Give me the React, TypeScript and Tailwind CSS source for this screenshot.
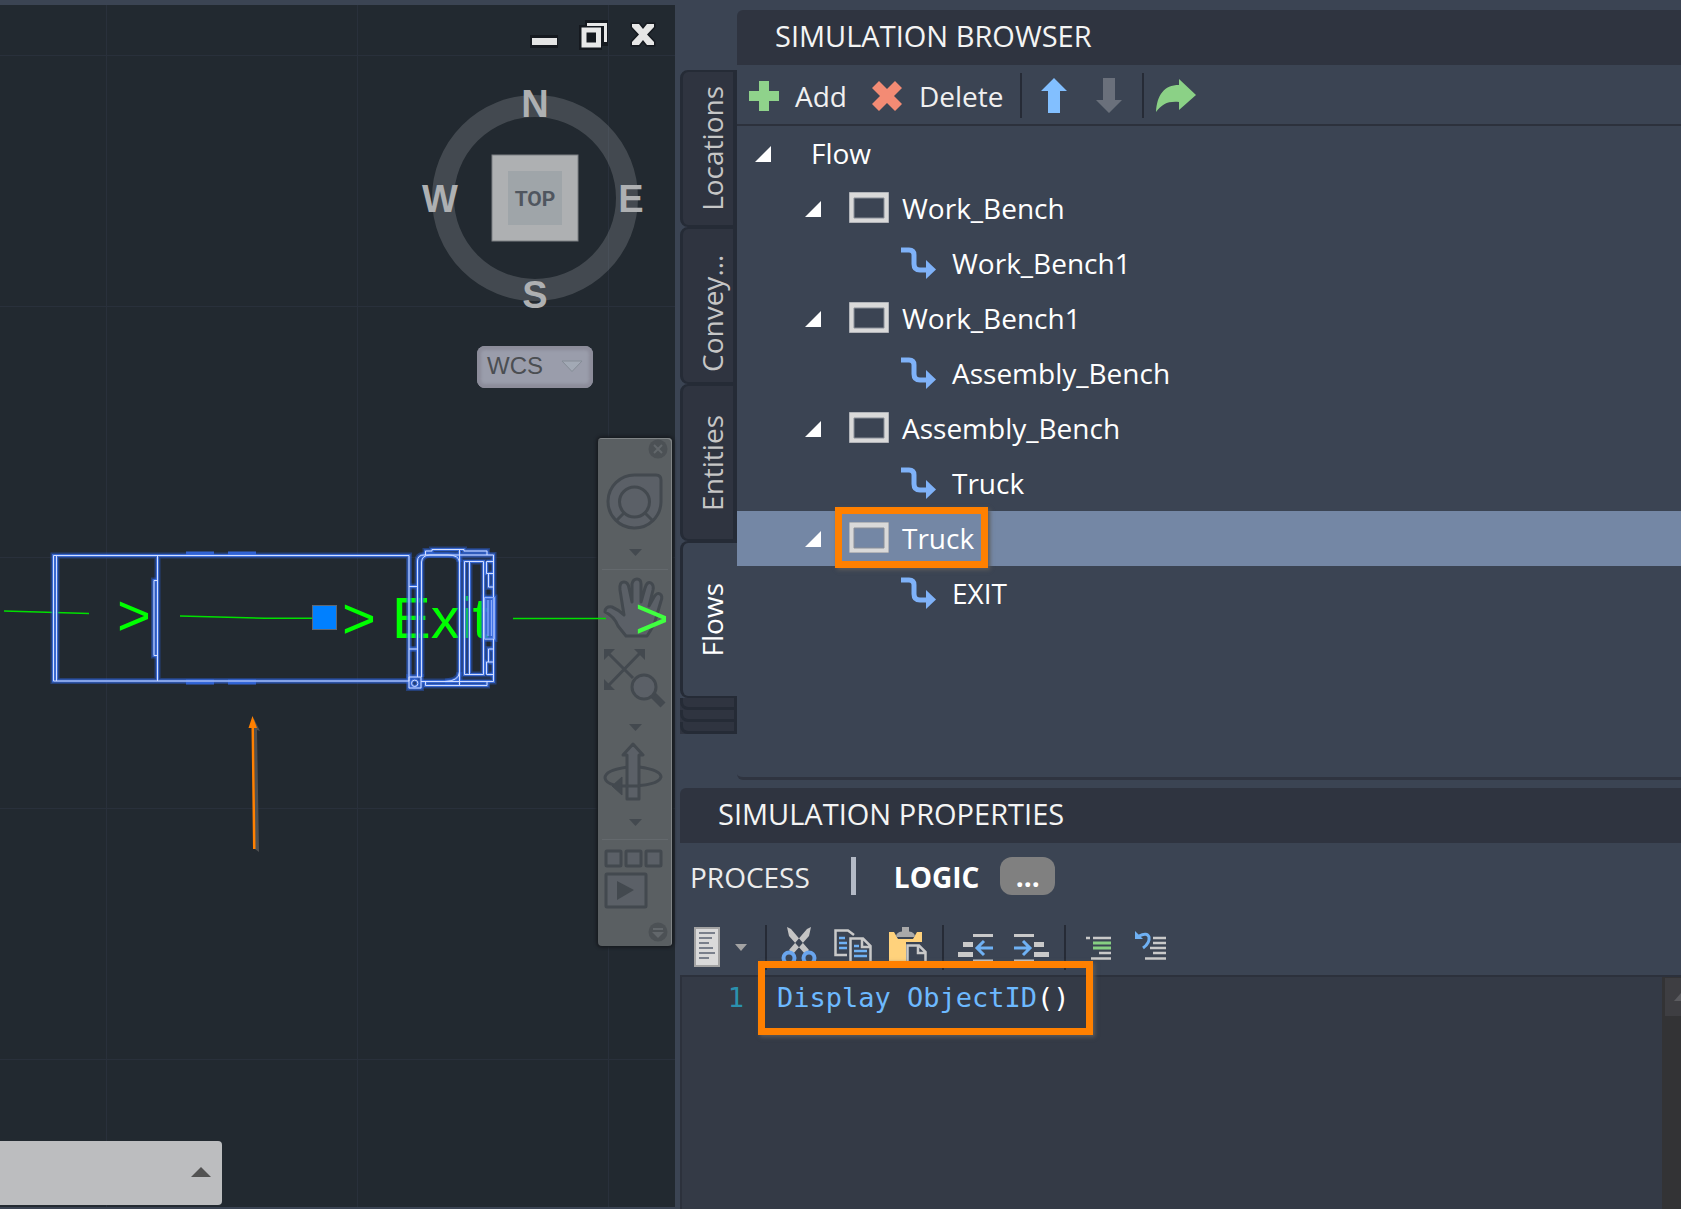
import { useState } from "react";

type NodeKind = "root" | "station" | "link";

const tree: { id: number; label: string; kind: NodeKind; marked?: boolean }[] = [
  { id: 1, label: "Flow",           kind: "root" },
  { id: 2, label: "Work_Bench",     kind: "station" },
  { id: 3, label: "Work_Bench1",    kind: "link" },
  { id: 4, label: "Work_Bench1",    kind: "station" },
  { id: 5, label: "Assembly_Bench", kind: "link" },
  { id: 6, label: "Assembly_Bench", kind: "station" },
  { id: 7, label: "Truck",          kind: "link" },
  { id: 8, label: "Truck",          kind: "station", marked: true },
  { id: 9, label: "EXIT",           kind: "link" },
];

const sideTabs = [
  { label: "Locations", clipped: false },
  { label: "Convey...", clipped: true },
  { label: "Entities",  clipped: false },
  { label: "Flows",     clipped: false },
];

/* ---------- drawing area ---------- */

function GridLines() {
  return (
    <svg className="absolute inset-0 h-full w-full" aria-hidden="true">
      <defs>
        <pattern id="grid" x="106" y="50" width="251" height="251" patternUnits="userSpaceOnUse">
          <path d="M0.5 0V251M0 0.5H251" stroke="#29303b" strokeWidth="1" />
        </pattern>
      </defs>
      <rect width="100%" height="100%" fill="url(#grid)" />
    </svg>
  );
}

function Scene() {
  return (
    <svg className="pointer-events-none absolute left-0 top-0 h-[900px] w-[675px]" viewBox="0 5 675 900">
      <g stroke="#00e000" strokeWidth="1.5" fill="none">
        <path d="M4 611L89 613.5" />
        <path d="M180 616L265 618.3H312" />
        <path d="M513 618.5H606" />
      </g>
      <g fill="#00ff00" fontFamily="Liberation Sans, Arial, sans-serif" fontSize="58">
        <text x="117" y="635">&gt;</text>
        <text x="342" y="638">&gt;</text>
        <text x="392" y="638">Exit</text>
        <text x="635" y="638" fill="#40ff40">&gt;</text>
      </g>
      <defs>
        <g id="truck" fill="none">
          <path d="M53.5 555.5H409V681H53.5ZM56.5 555.5V681M157.5 555.5V681" />
          <path d="M157.5 580.5H154V655.5H157.5" />
          <path d="M409 586.5H417M409 649H417" />
          <path d="M417.5 677V561Q417.5 555 424 555H493.5V681.5H421" />
          <path d="M421.5 677V562Q422 555 430 555H448Q459 555 459.5 562V672Q459 681 445 681.5" />
          <path d="M425.5 555V551H432V549.5H464V551H487V555M459.5 550V562" />
          <path d="M425.5 681.5V685.5H487V681.5M459.5 672V685" />
          <path d="M464.5 561.5H483.5V674.5H464.5ZM469.5 561.5V674.5" />
          <path d="M486.5 561.5H493.5M486.5 561.5V573.5H493.5M488.5 573.5V587H493.5" />
          <path d="M486.5 674.5H493.5M486.5 674.5V662H493.5M488.5 662V649H493.5" />
          <path d="M484.5 597.5H494.5V639H484.5ZM488 600V636M491.5 600V636" />
          <path d="M409 677H421V688H409Z" />
          <circle cx="414.7" cy="683.3" r="3.2" />
        </g>
      </defs>
      <path d="M186 554H214M228 554H256M186 682H214M228 682H256" stroke="#3566d6" strokeWidth="5" />
      <use href="#truck" stroke="#2a5ed0" strokeOpacity="0.45" strokeWidth="6" />
      <use href="#truck" stroke="#3c70e0" strokeOpacity="0.85" strokeWidth="3" />
      <use href="#truck" stroke="#d3deff" strokeWidth="1" />
      <rect x="484" y="597" width="11" height="42" fill="#4a7cf0" fillOpacity="0.5" />
      <rect x="312.5" y="605.5" width="24" height="24" fill="#0080ff" stroke="#5f6873" />
      <path d="M254 719L260 731L257 730L259 852L255 849Z" fill="#5b5b5b" opacity="0.8" />
      <path d="M252.5 716L257 728H254L255.5 849H253L251.5 728H248.5Z" fill="#ff8000" />
    </svg>
  );
}

function ViewCube() {
  return (
    <svg className="h-[240px] w-[230px]" viewBox="0 0 230 240" role="img" aria-label="View cube">
      <circle cx="115" cy="115" r="92" fill="none" stroke="#a9acaf" strokeOpacity="0.25" strokeWidth="22" />
      <rect x="72" y="72" width="86" height="86" fill="#aeb0b2" stroke="#7d8083" />
      <rect x="88" y="88" width="54" height="54" fill="#9fa5a9" />
      <text x="115" y="123" textAnchor="middle" fontFamily="Roboto, sans-serif" fontWeight="700" fontSize="21" fill="#50565f">TOP</text>
      <g fontFamily="Liberation Sans, Arial, sans-serif" fontWeight="700" fontSize="38" fill="#aeb0b2" textAnchor="middle">
        <text x="115" y="34">N</text>
        <text x="115" y="225">S</text>
        <text x="20" y="129">W</text>
        <text x="211" y="129">E</text>
      </g>
    </svg>
  );
}

function WindowButtons() {
  return (
    <div className="flex justify-end gap-5 pr-[17px] pt-3">
      <button aria-label="Minimize" className="h-[34px] w-[30px]">
        <svg viewBox="0 0 30 34" className="h-full w-full">
          <rect x="2" y="18" width="28" height="13" fill="#15191f" />
          <rect x="4" y="21" width="25" height="7" fill="#e4e4e4" />
        </svg>
      </button>
      <button aria-label="Restore" className="h-[34px] w-[30px]">
        <svg viewBox="0 0 30 34" className="h-full w-full">
          <path d="M7 3H30V29H24V33H1V8H7Z" fill="#15191f" />
          <path d="M9 7.500H27.500V25" fill="none" stroke="#e8e8e8" strokeWidth="3" />
          <rect x="6" y="13" width="14.500" height="15" fill="#15191f" stroke="#e8e8e8" strokeWidth="5" />
        </svg>
      </button>
      <button aria-label="Close" className="h-[34px] w-[30px]">
        <svg viewBox="0 0 30 34" className="h-full w-full">
          <path d="M4 7H11L15 12L19 7H26V10L19 17.500L26 25V28H19L15 23L11 28H4V25L11 17.500L4 10Z" fill="#e6e6e6" stroke="#15191f" strokeWidth="3" paintOrder="stroke" />
        </svg>
      </button>
    </div>
  );
}

function NavCaret() {
  return (
    <svg viewBox="0 0 74 28" className="h-7 w-full" fill="#43494f">
      <path d="M31 11H44L37.500 18Z" />
    </svg>
  );
}

function NavigationBar() {
  return (
    <div className="mr-[3px] flex w-[74px] flex-col rounded bg-[#5a5f62] shadow-[0_0_3px_2px_#181c21,inset_-1px_1px_0_#808486] [&_svg]:block">
      <button aria-label="Close bar">
        <svg viewBox="0 0 74 24" className="h-6 w-full">
          <circle cx="60" cy="11" r="9.500" fill="#4c5155" />
          <path d="M56 7L64 15M64 7L56 15" stroke="#62676b" strokeWidth="2" />
        </svg>
      </button>
      <button aria-label="Steering wheel">
        <svg viewBox="0 0 74 76" className="h-[76px] w-full" fill="#5b6067" stroke="#43494f" strokeWidth="3">
          <path d="M37 13H58Q63 13 63 18V40A26.500 26.500 0 1 1 37 13Z" />
          <circle cx="36.500" cy="40" r="15" />
          <path d="M26 51L18 59M47 51L55 59" />
        </svg>
      </button>
      <NavCaret />
      <hr className="mx-1 mt-[3px] border-[#64696d]" />
      <button aria-label="Pan">
        <svg viewBox="0 0 74 74" className="h-[74px] w-full" fill="#5b6067" stroke="#43494f" strokeWidth="3" strokeLinejoin="round">
          <path d="M28 66L20 56Q16 46 7 42Q7 36 14 37Q21 40 26 45L22 20Q21 12 26 12Q30 12 31 18L34 32V14Q35 9 39 9Q43 9 43 14V32L47 18Q49 11 53 13Q56 15 55 20L51 36L56 27Q59 22 62 24Q65 26 63 31L58 48Q56 56 49 66Z" />
        </svg>
      </button>
      <button aria-label="Zoom extents">
        <svg viewBox="0 0 74 69" className="h-[69px] w-full" fill="none" stroke="#43494f" strokeWidth="3">
          <path d="M10 9L35 34M42 9L10 42" />
          <path d="M6 5H17L6 16ZM47 5H36L47 16ZM6 46V35L17 46Z" fill="#43494f" stroke="none" />
          <path d="M54 50L65 61" strokeWidth="7" />
          <circle cx="46" cy="43" r="12" fill="#5b6067" />
        </svg>
      </button>
      <NavCaret />
      <button aria-label="Orbit">
        <svg viewBox="0 0 74 67" className="h-[67px] w-full" fill="#5b6067" stroke="#43494f" strokeWidth="3" strokeLinejoin="round">
          <path d="M30 26Q7 29 7 37Q8 42 16 44M41 26Q63 29 63 36Q60 46 20 45" fill="none" />
          <path d="M35 3L45 14H41V58H29V14H25Z" />
          <path d="M29 45H41" />
          <path d="M14 45L24 36V54Z" fill="#43494f" strokeWidth="1" />
        </svg>
      </button>
      <NavCaret />
      <hr className="mx-1 mt-[3px] border-[#64696d]" />
      <button aria-label="Show motion">
        <svg viewBox="0 0 74 78" className="h-[78px] w-full" fill="#5b6067" stroke="#43494f" strokeWidth="3">
          <rect x="8" y="11" width="15" height="15" rx="1" />
          <rect x="28" y="11" width="15" height="15" rx="1" />
          <rect x="48" y="11" width="15" height="15" rx="1" />
          <rect x="8" y="34" width="40" height="33" rx="1" />
          <path d="M19 41V60L36 50Z" fill="#43494f" stroke="none" />
        </svg>
      </button>
      <button aria-label="Bar options">
        <svg viewBox="0 0 74 28" className="h-7 w-full">
          <circle cx="60" cy="14" r="9.500" fill="#4c5155" />
          <path d="M55 11H65" stroke="#62676b" strokeWidth="2" />
          <path d="M54 14H66L60 20Z" fill="#62676b" />
        </svg>
      </button>
    </div>
  );
}

function Viewport() {
  return (
    <section className="relative flex flex-col bg-[#222930]" aria-label="Drawing">
      <GridLines />
      <div className="relative flex flex-1 flex-col">
        <WindowButtons />
        <div className="mt-8 flex flex-col items-end">
          <div className="mr-[25px] flex w-[230px] flex-col items-center">
            <ViewCube />
            <button className="mt-[23px] flex h-[42px] w-[116px] items-center justify-between rounded-lg bg-[#9a9dab] px-[10px] pb-[2px] font-['Liberation_Sans',Arial,sans-serif] text-[24px] text-[#4b4e52] shadow-[inset_0_0_3px_4px_#8c8c9a]">
              WCS
              <svg viewBox="0 0 22 12" className="h-3 w-[22px]">
                <path d="M1 1H21L11 11.500Z" fill="#a2a9b5" stroke="#858c96" />
              </svg>
            </button>
          </div>
          <div className="mt-[50px]">
            <NavigationBar />
          </div>
        </div>
        <button aria-label="Command history" className="mb-[2px] mt-auto flex h-16 w-[222px] items-center justify-end rounded-r bg-[#bcbdbf] pb-[2px] pr-[11px]">
          <svg viewBox="0 0 20 10" className="h-[10px] w-5" fill="#525252">
            <path d="M10 0L20 10H0Z" />
          </svg>
        </button>
      </div>
      <Scene />
    </section>
  );
}

/* ---------- simulation browser ---------- */

function Divider() {
  return <span className="h-[45px] w-[2px] bg-[#262b36]" />;
}

function BrowserToolbar() {
  return (
    <div className="flex h-[61px] items-center border-b-2 border-[#2c313c] pl-3 pt-[2px] text-[#f0f0f0]">
      <button className="flex items-center gap-4">
        <svg viewBox="0 0 30 30" className="h-[30px] w-[30px]" fill="#8fd28b">
          <path d="M10 0H20V10H30V20H20V30H10V20H0V10H10Z" />
        </svg>
        Add
      </button>
      <button className="ml-6 flex items-center gap-4">
        <svg viewBox="0 0 32 32" className="h-8 w-8" fill="#f38b74">
          <path d="M8 1L16 9L24 1L31 8L23 16L31 24L24 31L16 23L8 31L1 24L9 16L1 8Z" />
        </svg>
        Delete
      </button>
      <span className="ml-4 mr-[19px] flex"><Divider /></span>
      <button aria-label="Move up">
        <svg viewBox="0 0 26 35" className="h-[35px] w-[26px]" fill="#82bfff">
          <path d="M13 0L26 13H19V35H7V13H0Z" />
        </svg>
      </button>
      <button aria-label="Move down" className="ml-[29px]">
        <svg viewBox="0 0 26 35" className="h-[35px] w-[26px]" fill="#6a707b">
          <path d="M13 35L26 22H19V0H7V22H0Z" />
        </svg>
      </button>
      <span className="ml-5 mr-3 flex"><Divider /></span>
      <button aria-label="Share">
        <svg viewBox="0 0 40 34" className="h-[34px] w-10" fill="#8bd186">
          <path d="M0 33C1 16 8 6 23 6V0L40 16L23 31V23C12 22 6 25 0 33Z" />
        </svg>
      </button>
    </div>
  );
}

function Expander() {
  return (
    <button aria-label="Collapse" className="mt-[2px] h-4 w-4 shrink-0">
      <svg viewBox="0 0 16 16" className="h-full w-full" fill="#ffffff">
        <path d="M16 0V16H0Z" />
      </svg>
    </button>
  );
}

function FlowTree() {
  const [selected, setSelected] = useState(8);

  return (
    <ul className="flex-1">
      {tree.map((n) => (
        <li
          key={n.id}
          onClick={() => setSelected(n.id)}
          className={`flex h-[55px] items-center pb-[2px] text-white ${selected === n.id ? "bg-[#7487a5]" : ""} ${
            n.kind === "root" ? "gap-10 pl-[18px]" : n.kind === "station" ? "gap-7 pl-[68px]" : "gap-4 pl-[164px]"
          }`}
        >
          {n.kind !== "link" && <Expander />}
          {n.kind === "station" && (
            <span className="relative flex items-center gap-[13px]">
              <svg viewBox="0 0 40 31" className="h-[31px] w-10">
                <path d="M0 0H40V31H0ZM5 6V26H35V6Z" fill="#d9d9d9" fillRule="evenodd" stroke="#8a8f99" />
              </svg>
              {n.label}
              {n.marked && (
                <span className="pointer-events-none absolute -inset-x-[14px] -bottom-[9px] -top-[10px] border-[7px] border-[#ff8000] shadow-[2px_2px_4px_#5b5b5b]" />
              )}
            </span>
          )}
          {n.kind === "link" && (
            <svg viewBox="0 0 35 32" className="h-8 w-[35px]">
              <path d="M0 3H8Q13 3 13 8V17Q13 23 19 23H27" fill="none" stroke="#7fb2f8" strokeWidth="5" />
              <path d="M25 13L35 22.500L25 32Z" fill="#7fb2f8" />
            </svg>
          )}
          {n.kind !== "station" && <span>{n.label}</span>}
        </li>
      ))}
    </ul>
  );
}

function SideTabs() {
  const [active, setActive] = useState("Flows");

  return (
    <div className="mt-[60px] w-[57px] shrink-0" role="tablist">
      {sideTabs.map((t) => (
        <button
          key={t.label}
          role="tab"
          aria-selected={active === t.label}
          onClick={() => setActive(t.label)}
          className={`flex h-[157px] w-full items-center justify-center rounded-l-lg border-y-2 border-l-[3px] border-[#252b36] ${
            active === t.label ? "bg-[#3b4453] pl-1 text-white" : "border-r-4 bg-[#2f3440] pl-2 text-[#c6c6c6]"
          }`}
        >
          <span className={`rotate-180 text-left leading-[36px] [writing-mode:vertical-rl] ${t.clipped ? "h-[132px]" : ""}`}>{t.label}</span>
        </button>
      ))}
      {[1, 2, 3].map((i) => (
        <div key={i} className="bg-[#2f3440]">
          <div className="h-3 rounded-bl-lg border-b-[3px] border-l-[3px] border-r-[3px] border-[#252b36]" />
        </div>
      ))}
    </div>
  );
}

function SimulationBrowser() {
  return (
    <section className="flex pb-2 pt-[10px]">
      <SideTabs />
      <div className="flex flex-1 flex-col rounded-bl-md rounded-tl-md border-b-[3px] border-[#2f3440]">
        <h2 className="flex h-[55px] items-center rounded-tl-md bg-[#2f3440] pb-1 pl-[38px] text-[29px] text-[#f4f4f4]">SIMULATION BROWSER</h2>
        <BrowserToolbar />
        <FlowTree />
      </div>
    </section>
  );
}

/* ---------- simulation properties ---------- */

function EditorToolbar() {
  return (
    <div className="flex h-[62px] items-start pl-[14px] pt-3 [&_svg]:block">
      <button aria-label="Snippets" className="flex items-center gap-[15px] pt-[2px]">
        <svg viewBox="0 0 26 40" className="h-10 w-[26px]">
          <rect x="1" y="1" width="24" height="38" fill="#dadada" stroke="#a3a3a3" strokeWidth="2" />
          <path d="M5 6H21M5 11H18M5 16H15M5 21H19M5 26H21M5 31H15" stroke="#7a808c" strokeWidth="2" />
        </svg>
        <svg viewBox="0 0 12 7" className="h-[7px] w-3" fill="#a3a3a3">
          <path d="M0 0H12L6 7Z" />
        </svg>
      </button>
      <span className="ml-[18px] mr-[14px] flex"><Divider /></span>
      <button aria-label="Cut" className="pt-[2px]">
        <svg viewBox="0 0 36 40" className="h-10 w-9">
          <path d="M6 0L8 9L24 27L28 23L10 2ZM30 0L28 9L12 27L8 23L26 2Z" fill="#c4c4c4" />
          <circle cx="8" cy="31" r="5.500" fill="none" stroke="#69a5ee" strokeWidth="4" />
          <circle cx="28" cy="31" r="5.500" fill="none" stroke="#69a5ee" strokeWidth="4" />
        </svg>
      </button>
      <button aria-label="Copy" className="ml-[17px] pt-[2px]">
        <svg viewBox="0 0 38 38" className="h-[38px] w-[38px]" fill="none" strokeWidth="2.500" stroke="#c9c9c9">
          <path d="M13 28H1.500V3.500H14L20 8" />
          <path d="M16.500 38V11.500H29L36.500 19V38M28 12V20H36" />
          <path d="M5 11H11M5 16H13M5 21H13M20 19H25M20 24H33M20 29H33" stroke="#6fb1f4" />
        </svg>
      </button>
      <button aria-label="Paste" className="ml-[17px] pt-[2px]">
        <svg viewBox="0 0 38 38" className="h-[38px] w-[38px]">
          <path d="M0 5H5L9 12H24L28 5H33V15H17V38H0Z" fill="#ffd27c" />
          <path d="M7 10Q7 5 13 4.500V0H20V4.500Q26 5 26 10Z" fill="#a9a9a9" />
          <path d="M18.500 38V18.500H30L36.500 25V38M29 19V26H36" fill="none" stroke="#c9c9c9" strokeWidth="2.500" />
        </svg>
      </button>
      <span className="ml-[15px] mr-[14px] flex"><Divider /></span>
      <button aria-label="Outdent" className="pt-[2px]">
        <svg viewBox="0 0 36 40" className="h-10 w-9">
          <path d="M15 8.500H35M15 34H35" stroke="#c9c9c9" strokeWidth="3" />
          <path d="M5 17.500H15M0 27.500H15" stroke="#c9c9c9" strokeWidth="5" />
          <path d="M35 21H19M26 14L19 21L26 28" fill="none" stroke="#6fb1f4" strokeWidth="3" />
        </svg>
      </button>
      <button aria-label="Indent" className="ml-[19px] pt-[2px]">
        <svg viewBox="0 0 36 40" className="h-10 w-9">
          <path d="M1 8.500H21M1 34H21" stroke="#c9c9c9" strokeWidth="3" />
          <path d="M21 17.500H31M21 27.500H36" stroke="#c9c9c9" strokeWidth="5" />
          <path d="M1 21H17M10 14L17 21L10 28" fill="none" stroke="#6fb1f4" strokeWidth="3" />
        </svg>
      </button>
      <span className="ml-[15px] mr-5 flex"><Divider /></span>
      <button aria-label="Comment" className="pt-[2px]">
        <svg viewBox="0 0 26 40" className="h-10 w-[26px]" strokeWidth="2.500">
          <path d="M0 11H4M7 11H25M13 26H25M5 31.500H25" stroke="#c9c9c9" />
          <path d="M7 16H25M7 21H25" stroke="#86cf82" strokeWidth="3" />
        </svg>
      </button>
      <button aria-label="Uncomment" className="ml-[23px] pt-[2px]">
        <svg viewBox="0 0 32 40" className="h-10 w-8" fill="none">
          <path d="M18 11H31M18 16H31M15 21H31M18 26H31M10 31.500H31" stroke="#c9c9c9" strokeWidth="2.500" />
          <path d="M4 9Q12 5 14 10Q15 16 8 21" stroke="#6fb1f4" strokeWidth="3" />
          <path d="M0 4V12H8Z" fill="#6fb1f4" />
        </svg>
      </button>
    </div>
  );
}

function CodeEditor() {
  return (
    <div className="flex flex-1 border-l-2 border-t-2 border-[#2c313c] bg-[#343a46]">
      <div className="flex flex-1 items-start pt-[3px] font-['DejaVu_Sans_Mono',monospace] text-[27px] leading-[36px]">
        <span className="w-[62px] text-right text-[#2b91af]">1</span>
        <code className="relative ml-[33px] font-[inherit] text-[#6db9ff]">
          Display ObjectID<span className="text-white">()</span>
          <span className="pointer-events-none absolute -bottom-[19px] -left-[19px] -right-[23px] -top-[19px] border-[7px] border-[#ff8000] shadow-[2px_2px_4px_#5b5b5b]" />
        </code>
      </div>
      <div className="w-[19px] bg-[#333335] pl-[3px] pt-px">
        <button aria-label="Scroll up" className="flex h-[38px] w-full items-center overflow-hidden bg-[#3e3e42] pl-[9px]">
          <svg viewBox="0 0 7 8" className="h-2 w-[7px]" fill="#5c5c60">
            <path d="M7 0V8H0Z" />
          </svg>
        </button>
      </div>
    </div>
  );
}

function SimulationProperties() {
  return (
    <section className="flex flex-col">
      <h2 className="flex h-[55px] items-center rounded-tl-md bg-[#2f3440] pb-1 pl-[38px] text-[29px] text-[#f4f4f4]">SIMULATION PROPERTIES</h2>
      <div className="flex h-[70px] items-center pb-1 pl-[10px]">
        <button className="pt-[2px] text-[#ececec]">PROCESS</button>
        <span className="ml-[41px] mr-[38px] h-[38px] w-[5px] bg-[#b3bac6]" />
        <button className="pt-[2px] font-bold text-white">LOGIC</button>
        <button className="ml-[21px] h-[38px] w-[55px] rounded-xl bg-[#808080] font-bold leading-[34px] text-white">...</button>
      </div>
      <EditorToolbar />
      <CodeEditor />
    </section>
  );
}

export default function App() {
  return (
    <div className="grid min-h-screen grid-cols-[675fr_1006fr] overflow-hidden bg-[#3b4453] font-['Open_Sans','Noto_Sans',sans-serif] text-[28px]">
      <div className="grid pb-[2px] pt-[5px]">
        <Viewport />
      </div>
      <main className="grid grid-rows-[788fr_421fr] pl-[5px]">
        <SimulationBrowser />
        <SimulationProperties />
      </main>
    </div>
  );
}
